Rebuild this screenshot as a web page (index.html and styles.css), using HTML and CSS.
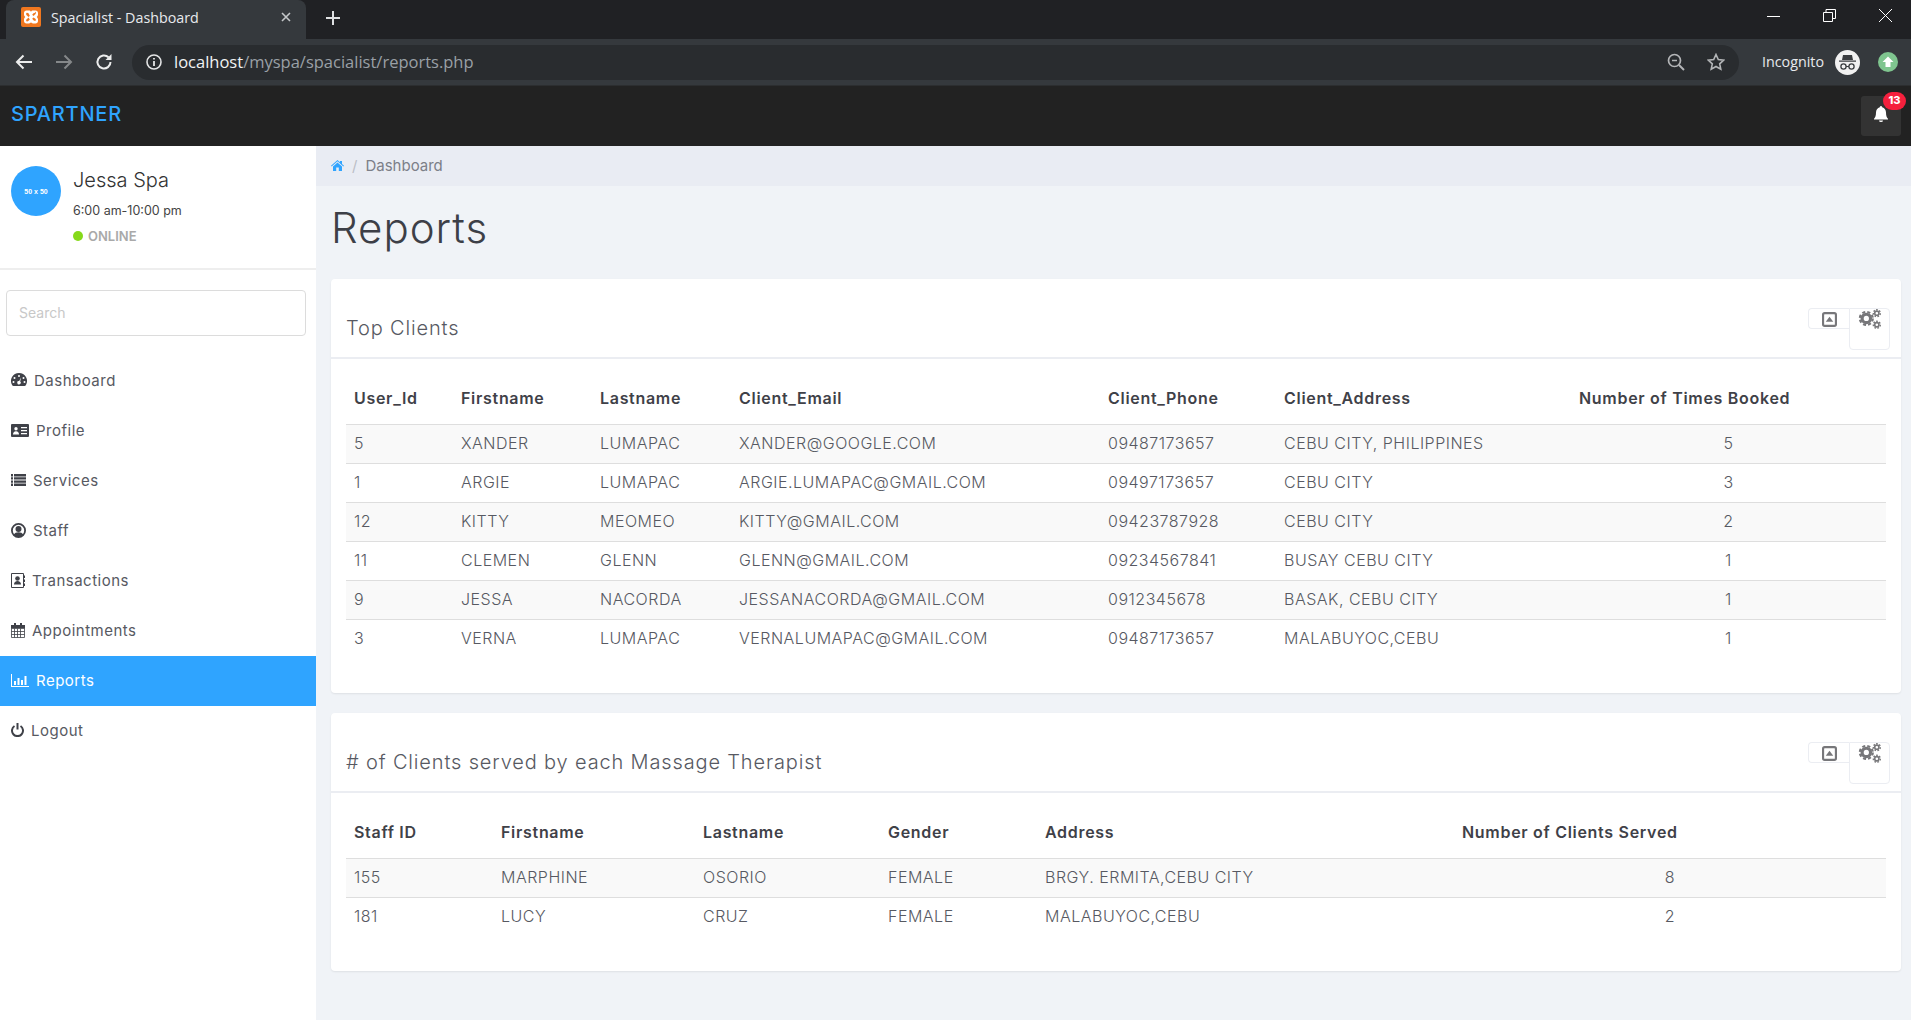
FILE: index.html
```html
<!DOCTYPE html>
<html lang="en">
<head>
    <meta charset="UTF-8">
    <meta name="viewport" content="width=device-width, initial-scale=1.0">
    <title>Spacialist - Dashboard</title>
    <link rel="stylesheet" href="styles.css">
</head>
<body>
    <!-- browser chrome -->
    <div class="tabbar">
        <div class="tab">
            <svg class="favicon" width="20" height="20" viewBox="0 0 20 20"><rect width="20" height="20" rx="2" fill="#f0771f"/><path fill-rule="evenodd" d="M5.500 3.500h2.500c1 0 1.500.5 2 1.200.5-.7 1-1.200 2-1.200h2.500c1.500 0 2.500 1 2.500 2.500v1.500c0 1-.5 1.800-1.300 2.500.8.700 1.300 1.500 1.300 2.500V14c0 1.500-1 2.500-2.500 2.500H12c-1 0-1.500-.5-2-1.200-.5.7-1 1.200-2 1.200H5.500C4 16.500 3 15.500 3 14v-1.500c0-1 .5-1.800 1.300-2.500C3.500 9.300 3 8.500 3 7.500V6c0-1.500 1-2.500 2.500-2.500zM6 5.700c-.6 0-.8.300-.8.800v.8c0 .5.200.8.800 1.200l1.500 1.500 1.300-1.300L7.500 6.300c-.4-.4-.8-.6-1.500-.6zM14 5.700c-.7 0-1.100.2-1.500.6l-1.300 1.400 1.300 1.300L14 7.500c.6-.4.800-.7.800-1.200v-.8c0-.5-.2-.8-.8-.8zM7.500 10.500L6 12c-.6.400-.8.700-.8 1.200v.6c0 .5.200.6.800.6.7 0 1.100-.2 1.500-.6l1.300-1.400zM12.500 10.500l-1.300 1.300 1.300 1.400c.4.400.8.600 1.500.6.600 0 .8-.1.800-.6v-.6c0-.5-.2-.8-.8-1.200z" fill="#fff"/></svg>
            <span class="tab-title">Spacialist - Dashboard</span>
            <svg class="tab-close" width="10" height="10" viewBox="0 0 10 10"><path d="M1 1l8 8M9 1l-8 8" stroke="#c4c7c9" stroke-width="1.600"/></svg>
        </div>
        <svg class="tab-new" width="14" height="14" viewBox="0 0 14 14"><path d="M7 0v14M0 7h14" stroke="#dfe1e3" stroke-width="2"/></svg>
        <div class="window-btns">
            <svg width="13" height="13" viewBox="0 0 13 13"><path d="M0 7.500h13" stroke="#fff"/></svg>
            <svg width="13" height="13" viewBox="0 0 13 13"><path d="M.5 3.500h9v9h-9zM3 3.500v-3h9.500v9h-3" fill="none" stroke="#fff"/></svg>
            <svg width="13" height="13" viewBox="0 0 13 13"><path d="M0 0l13 13M13 0L0 13" stroke="#fff"/></svg>
        </div>
    </div>
    <div class="toolbar">
        <svg class="tool-ico" width="18" height="16" viewBox="0 0 18 16"><path d="M17 8H2M8.500 1.500L2 8l6.500 6.500" fill="none" stroke="#eceded" stroke-width="2"/></svg>
        <svg class="tool-ico" width="18" height="16" viewBox="0 0 18 16"><path d="M1 8h15M9.500 1.500L16 8l-6.500 6.500" fill="none" stroke="#85888a" stroke-width="2"/></svg>
        <svg class="tool-ico" width="18" height="18" viewBox="0 0 18 18"><path d="M15.500 9a6.500 6.500 0 1 1-2-4.700" fill="none" stroke="#eceded" stroke-width="2"/><path d="M16.500 1v6h-6z" fill="#eceded"/></svg>
        <div class="urlbar">
            <svg width="16" height="16" viewBox="0 0 16 16"><circle cx="8" cy="8" r="7" fill="none" stroke="#e4e5e6" stroke-width="1.600"/><path d="M8 7v5M8 4v1.600" stroke="#e4e5e6" stroke-width="1.800"/></svg>
            <span class="url"><b>localhost</b>/myspa/spacialist/reports.php</span>
            <svg class="url-zoom" width="18" height="18" viewBox="0 0 18 18"><circle cx="7.500" cy="7.500" r="6" fill="none" stroke="#b3b5b7" stroke-width="1.700"/><path d="M12 12l5 5" stroke="#b3b5b7" stroke-width="2"/><path d="M5 7.500h5" stroke="#b3b5b7" stroke-width="1.500"/></svg>
            <svg width="18" height="18" viewBox="0 0 18 18"><path d="M9 1.500l2.300 5 5.400.6-4 3.700 1.100 5.400L9 13.500l-4.800 2.700 1.100-5.400-4-3.700 5.400-.6z" fill="none" stroke="#b3b5b7" stroke-width="1.600"/></svg>
        </div>
        <span class="incognito">Incognito</span>
        <svg class="incog-ico" width="25" height="25" viewBox="0 0 25 25"><circle cx="12.500" cy="12.500" r="12.500" fill="#f1f1f1"/><path d="M8 5h9l1 5H7zM4 10.500h17v1.300H4z" fill="#3a3d40"/><circle cx="8.500" cy="16.500" r="2.600" fill="none" stroke="#3a3d40" stroke-width="1.300"/><circle cx="16.500" cy="16.500" r="2.600" fill="none" stroke="#3a3d40" stroke-width="1.300"/><path d="M11 16.500h3" stroke="#3a3d40"/></svg>
        <svg class="ext-ico" width="20" height="20" viewBox="0 0 20 20"><circle cx="10" cy="10" r="10" fill="#7fc58f"/><path d="M10 4.500l5.500 5.500h-3v5h-5v-5h-3z" fill="#fff"/></svg>
    </div>

    <div class="navbar">
        <a class="brand">SPARTNER</a>
        <div class="bell">
            <svg width="14" height="16" viewBox="0 0 14 16"><path d="M7 0c1 0 1.200.8 1.200 1.300C10.600 1.900 12 4 12 6.500c0 3.500.8 5 2 6.200V13.500H0v-.8C1.200 11.500 2 10 2 6.500 2 4 3.400 1.900 5.800 1.300 5.800.8 6 0 7 0zM5 14.500h4a2 1.500 0 0 1-4 0z" fill="#fff"/></svg>
            <span class="badge">13</span>
        </div>
    </div>

    <div class="layout">
        <aside class="sidebar">
            <div class="user-box">
                <div class="avatar">50 x 50</div>
                <div class="user-info">
                    <div class="user-name">Jessa Spa</div>
                    <div class="user-hours">6:00 am-10:00 pm</div>
                    <div class="user-status"><span class="dot"></span>ONLINE</div>
                </div>
            </div>
            <div class="search-wrap"><input class="search" type="text" placeholder="Search"></div>
            <ul class="menu">
                <li><svg width="16" height="14" viewBox="0 0 16 14"><path fill-rule="evenodd" d="M8 0a8 8 0 0 1 6.800 12.200c-.3.500-.7.800-1.200.8H2.400c-.5 0-.9-.3-1.200-.8A8 8 0 0 1 8 0zM8 2a1 1 0 1 0 0 2 1 1 0 0 0 0-2zM3.500 4a1 1 0 1 0 0 2 1 1 0 0 0 0-2zM12.500 4a1 1 0 1 0 0 2 1 1 0 0 0 0-2zM2.500 8a1 1 0 1 0 0 2 1 1 0 0 0 0-2zM13.500 8a1 1 0 1 0 0 2 1 1 0 0 0 0-2zM10 4.500L8.200 8a1.700 1.700 0 1 0 1 .5z"/></svg>Dashboard</li>
                <li><svg width="18" height="13" viewBox="0 0 18 13"><path fill-rule="evenodd" d="M0 1q0-1 1-1h16q1 0 1 1v11q0 1-1 1H1q-1 0-1-1zM5 3a1.700 1.700 0 1 0 0 3.400A1.700 1.700 0 0 0 5 3zM2 10.500h6c0-2-1-3.300-3-3.300s-3 1.300-3 3.300zM10 3v1.200h6V3zM10 6v1.200h6V6zM10 9v1.200h6V9z"/></svg>Profile</li>
                <li><svg width="15" height="12" viewBox="0 0 15 12"><path d="M0 0h2v2.400H0zM3 0h12v2.400H3zM0 3.200h2v2.400H0zM3 3.200h12v2.400H3zM0 6.400h2v2.400H0zM3 6.400h12v2.400H3zM0 9.600h2V12H0zM3 9.600h12V12H3z"/></svg>Services</li>
                <li><svg width="15" height="15" viewBox="0 0 15 15"><circle cx="7.500" cy="7.500" r="6.600" fill="none" stroke="currentColor" stroke-width="1.800"/><circle cx="7.500" cy="6" r="3"/><path d="M2.500 12c1-2 3-2.700 5-2.700s4 .7 5 2.700c-1.300 1.300-3 2-5 2s-3.700-.7-5-2z"/></svg>Staff</li>
                <li><svg width="14" height="15" viewBox="0 0 14 15"><path d="M.5.500h12v14H.5z" fill="none" stroke="currentColor"/><circle cx="6.500" cy="5.500" r="2.300"/><path d="M3 11.500c0-2.300 1.500-3.500 3.500-3.500s3.500 1.200 3.500 3.500z"/><path d="M13 2.500h1v2.500h-1zM13 6.500h1V9h-1zM13 10.500h1V13h-1z"/></svg>Transactions</li>
                <li><svg width="14" height="15" viewBox="0 0 14 15"><path d="M.5 2.500h13v12H.5zM.5 5.500h13M.5 8.500h13M.5 11.500h13M3.500 5.500v9M6.500 5.500v9M9.500 5.500v9" fill="none" stroke="currentColor" stroke-width=".8"/><path d="M3 0h2v4H3zM9 0h2v4H9zM0 2h14v3H0z"/></svg>Appointments</li>
                <li class="active"><svg width="18" height="13" viewBox="0 0 18 13"><path d="M0 0h1v12h17v1H0zM3 7h2v4H3zM6.500 4h2v7h-2zM10 6h2v5h-2zM13.500 2h2v9h-2z"/></svg>Reports</li>
                <li><svg width="13" height="14" viewBox="0 0 13 14"><path d="M3.500 3a5.500 5.500 0 1 0 6 0" fill="none" stroke="currentColor" stroke-width="2"/><path d="M6.500 0v6.500" stroke="currentColor" stroke-width="2"/></svg>Logout</li>
            </ul>
        </aside>

        <main class="content">
            <div class="breadcrumb">
                <svg width="13" height="11" viewBox="0 0 13 11"><path d="M6.500 0l2.500 2.200V1h2v3l2 1.800-.6.700L6.500 1.200.6 6.500 0 5.800zM2 6.500l4.500-4 4.500 4V11H7.800V7.500H5.200V11H2z" fill="#2fa4ff"/></svg>
                <span class="sep">/</span>
                <span>Dashboard</span>
            </div>
            <h1 class="page-title">Reports</h1>

            <section class="card">
                <div class="card-head">
                    <h2>Top Clients</h2>
                    <div class="tools">
                        <div class="tool tool-up"><svg width="15" height="15" viewBox="0 0 14 14"><rect x="1" y="1" width="12" height="12" rx="1.500" fill="none" stroke="#77777a" stroke-width="2"/><path d="M7 4.500L10.500 9h-7z" fill="#77777a"/></svg></div>
                        <div class="tool tool-cog"><svg width="24" height="21" viewBox="0 0 22 20"><circle cx="7.500" cy="9" r="4" fill="none" stroke="#77777a" stroke-width="3"/><circle cx="7.500" cy="9" r="6.200" fill="none" stroke="#77777a" stroke-width="2" stroke-dasharray="2.900 2"/><circle cx="17.500" cy="4" r="2" fill="none" stroke="#77777a" stroke-width="1.500"/><circle cx="17.500" cy="4" r="3.300" fill="none" stroke="#77777a" stroke-width="1.400" stroke-dasharray="1.600 1.300"/><circle cx="17.500" cy="15" r="2" fill="none" stroke="#77777a" stroke-width="1.500"/><circle cx="17.500" cy="15" r="3.300" fill="none" stroke="#77777a" stroke-width="1.400" stroke-dasharray="1.600 1.300"/></svg></div>
                    </div>
                </div>
                <div class="card-body">
                    <table class="tbl tbl-clients">
                        <thead>
                            <tr><th>User_Id</th><th>Firstname</th><th>Lastname</th><th>Client_Email</th><th>Client_Phone</th><th>Client_Address</th><th>Number of Times Booked</th></tr>
                        </thead>
                        <tbody>
                            <tr><td>5</td><td>XANDER</td><td>LUMAPAC</td><td>XANDER@GOOGLE.COM</td><td>09487173657</td><td>CEBU CITY, PHILIPPINES</td><td>5</td></tr>
                            <tr><td>1</td><td>ARGIE</td><td>LUMAPAC</td><td>ARGIE.LUMAPAC@GMAIL.COM</td><td>09497173657</td><td>CEBU CITY</td><td>3</td></tr>
                            <tr><td>12</td><td>KITTY</td><td>MEOMEO</td><td>KITTY@GMAIL.COM</td><td>09423787928</td><td>CEBU CITY</td><td>2</td></tr>
                            <tr><td>11</td><td>CLEMEN</td><td>GLENN</td><td>GLENN@GMAIL.COM</td><td>09234567841</td><td>BUSAY CEBU CITY</td><td>1</td></tr>
                            <tr><td>9</td><td>JESSA</td><td>NACORDA</td><td>JESSANACORDA@GMAIL.COM</td><td>0912345678</td><td>BASAK, CEBU CITY</td><td>1</td></tr>
                            <tr><td>3</td><td>VERNA</td><td>LUMAPAC</td><td>VERNALUMAPAC@GMAIL.COM</td><td>09487173657</td><td>MALABUYOC,CEBU</td><td>1</td></tr>
                        </tbody>
                    </table>
                </div>
            </section>

            <section class="card">
                <div class="card-head">
                    <h2># of Clients served by each Massage Therapist</h2>
                    <div class="tools">
                        <div class="tool tool-up"><svg width="15" height="15" viewBox="0 0 14 14"><rect x="1" y="1" width="12" height="12" rx="1.500" fill="none" stroke="#77777a" stroke-width="2"/><path d="M7 4.500L10.500 9h-7z" fill="#77777a"/></svg></div>
                        <div class="tool tool-cog"><svg width="24" height="21" viewBox="0 0 22 20"><circle cx="7.500" cy="9" r="4" fill="none" stroke="#77777a" stroke-width="3"/><circle cx="7.500" cy="9" r="6.200" fill="none" stroke="#77777a" stroke-width="2" stroke-dasharray="2.900 2"/><circle cx="17.500" cy="4" r="2" fill="none" stroke="#77777a" stroke-width="1.500"/><circle cx="17.500" cy="4" r="3.300" fill="none" stroke="#77777a" stroke-width="1.400" stroke-dasharray="1.600 1.300"/><circle cx="17.500" cy="15" r="2" fill="none" stroke="#77777a" stroke-width="1.500"/><circle cx="17.500" cy="15" r="3.300" fill="none" stroke="#77777a" stroke-width="1.400" stroke-dasharray="1.600 1.300"/></svg></div>
                    </div>
                </div>
                <div class="card-body">
                    <table class="tbl tbl-staff">
                        <thead>
                            <tr><th>Staff ID</th><th>Firstname</th><th>Lastname</th><th>Gender</th><th>Address</th><th>Number of Clients Served</th></tr>
                        </thead>
                        <tbody>
                            <tr><td>155</td><td>MARPHINE</td><td>OSORIO</td><td>FEMALE</td><td>BRGY. ERMITA,CEBU CITY</td><td>8</td></tr>
                            <tr><td>181</td><td>LUCY</td><td>CRUZ</td><td>FEMALE</td><td>MALABUYOC,CEBU</td><td>2</td></tr>
                        </tbody>
                    </table>
                </div>
            </section>
        </main>
    </div>
</body>
</html>
```

FILE: styles.css
```css
* {
    box-sizing: border-box;
}

body {
    margin: 0;
    height: 100vh;
    overflow: hidden;
    display: flex;
    flex-direction: column;
    font-family: Inter, "Open Sans", sans-serif;
    font-size: 14px;
    color: #575962;
    background-color: #f0f3f7;
}

/* browser chrome */
.tabbar {
    height: 39px;
    flex: none;
    display: flex;
    align-items: center;
    padding-left: 6px;
    background-color: #202124;
    font-family: "Open Sans", sans-serif;
}

.tab {
    width: 300px;
    height: 39px;
    display: flex;
    align-items: center;
    padding: 0 15px 5px;
    border-radius: 8px 8px 0 0;
    background-color: #35393d;
    color: #e8eaed;
    font-size: 14.3px;
}

.tab-title {
    flex: 1;
    margin-left: 10px;
}

.tab-new {
    margin: -3px 0 0 20px;
}

.window-btns {
    margin-left: auto;
    display: flex;
    gap: 43px;
    padding-right: 19px;
    margin-top: -8px;
}

.toolbar {
    height: 46px;
    flex: none;
    display: flex;
    align-items: center;
    padding-left: 15px;
    background-color: #35393d;
    font-family: "Open Sans", sans-serif;
}

.tool-ico {
    margin-right: 22px;
}

.urlbar {
    width: 1607px;
    height: 35px;
    flex: none;
    display: flex;
    align-items: center;
    margin-left: -3px;
    padding: 0 14px;
    border-radius: 18px;
    background-color: #292c2f;
    font-size: 16.5px;
    color: #9aa0a6;
}

.url {
    margin: -2px 0 0 12px;
    flex: 1;
}

.url b {
    font-weight: 400;
    color: #f1f3f4;
}

.url-zoom {
    margin-right: 22px;
}

.incognito {
    margin: -2px 0 0 23px;
    color: #e8eaed;
    font-size: 14.3px;
}

.incog-ico {
    margin-left: 11px;
}

.ext-ico {
    margin-left: 18px;
}

/* app navbar */
.navbar {
    height: 61px;
    flex: none;
    display: flex;
    align-items: center;
    justify-content: space-between;
    padding: 0 10px 0 11px;
    background-color: #222222;
    border-top: 1px solid #2c2e30;
}

.brand {
    margin-bottom: 4px;
    color: #2fa4ff;
    font-size: 20px;
    font-weight: 500;
    letter-spacing: .8px;
}

.bell {
    position: relative;
    width: 40px;
    height: 40px;
    display: flex;
    align-items: center;
    justify-content: center;
    padding-bottom: 4px;
    border-radius: 3px;
    background-color: #333333;
}

.badge {
    position: absolute;
    top: -4px;
    right: -5px;
    width: 23px;
    height: 18px;
    border-radius: 9px;
    background-color: #f5203d;
    color: #fff;
    font-size: 11px;
    font-weight: 800;
    line-height: 16px;
    text-align: center;
}

.layout {
    flex: 1;
    display: flex;
    min-height: 0;
}

/* sidebar */
.sidebar {
    width: 316px;
    flex: none;
    background-color: #fff;
}

.user-box {
    height: 124px;
    display: flex;
    padding: 21px 11px 0;
    border-bottom: 2px solid #eeeeee;
}

.avatar {
    width: 50px;
    height: 50px;
    flex: none;
    display: flex;
    align-items: center;
    justify-content: center;
    margin: -1px 12px 0 0;
    border-radius: 50%;
    background-color: #2fa4ff;
    color: #fff;
    font-family: "Liberation Sans", sans-serif;
    font-size: 7px;
    font-weight: 700;
}

.user-name {
    font-size: 20px;
    font-weight: 300;
    color: #333;
    line-height: 26px;
}

.user-hours {
    margin-top: 8px;
    font-size: 12.5px;
    color: #444;
    line-height: 20px;
}

.user-status {
    display: flex;
    align-items: center;
    margin-top: 5px;
    font-size: 13px;
    font-weight: 600;
    color: #a9a9a9;
    line-height: 20px;
}

.dot {
    width: 10px;
    height: 10px;
    margin-right: 5px;
    border-radius: 50%;
    background-color: #86d91a;
}

.search-wrap {
    padding: 20px 10px 20px 6px;
}

.search {
    width: 100%;
    height: 46px;
    padding: 0 12px 2px;
    border: 1px solid #dcdcdc;
    border-radius: 4px;
    outline: none;
    font-family: inherit;
    font-size: 14px;
}

.search::placeholder {
    color: #c8c8c8;
}

.menu {
    margin: 0;
    padding: 0;
    list-style: none;
}

.menu li {
    height: 50px;
    display: flex;
    align-items: center;
    padding: 0 0 2px 11px;
    font-size: 15px;
    font-weight: 400;
    letter-spacing: .5px;
    color: #575962;
}

.menu li svg {
    margin-right: 7px;
    fill: #3f4148;
    color: #3f4148;
}

.menu li.active {
    background-color: #2fa4ff;
    color: #fff;
}

.menu li.active svg {
    fill: #fff;
    color: #fff;
}

/* main content */
.content {
    flex: 1;
    min-width: 0;
    padding-right: 10px;
}

.breadcrumb {
    height: 40px;
    display: flex;
    align-items: center;
    gap: 8px;
    margin-right: -10px;
    padding: 0 0 2px 15px;
    background-color: #e9ecf3;
    color: #7c7f88;
    font-size: 15px;
}

.sep {
    color: #bbbec6;
}

.page-title {
    height: 93px;
    margin: 0;
    padding: 20px 0 0 15px;
    font-size: 42px;
    font-weight: 300;
    letter-spacing: 1px;
    color: #3d3f47;
    line-height: 44px;
}

.card {
    margin: 0 0 20px 15px;
    border-radius: 4px;
    background-color: #fff;
    box-shadow: 0 1px 2px rgba(0, 0, 0, .08);
}

.card-head {
    height: 80px;
    display: flex;
    justify-content: space-between;
    padding: 29px 11px 0 15px;
    border-bottom: 2px solid #ebedf2;
}

.card-head h2 {
    margin: 8px 0 0;
    font-size: 20px;
    font-weight: 300;
    letter-spacing: .85px;
    line-height: 24px;
    color: #575962;
}

.tools {
    display: flex;
    align-items: flex-start;
}

.tool {
    width: 41px;
    display: flex;
    justify-content: center;
    border: 1px solid #ebedf2;
}

.tool-up {
    height: 21px;
    padding-top: 2px;
    align-items: center;
    border-right: none;
    border-radius: 4px 0 0 4px;
}

.tool-cog {
    height: 42px;
    border-radius: 0 4px 4px 4px;
    align-items: flex-start;
}

.card-body {
    padding: 19px 15px 35px;
}

.tbl {
    width: 100%;
    table-layout: fixed;
    border-collapse: collapse;
    color: #575962;
}

.tbl th {
    height: 46px;
    padding: 0 8px 5px;
    text-align: left;
    font-size: 16px;
    font-weight: 600;
    letter-spacing: .7px;
    color: #3f4148;
}

.tbl td {
    height: 39px;
    padding: 0 8px 2px;
    border-top: 1px solid #dedede;
    font-size: 16px;
    font-weight: 300;
    letter-spacing: .5px;
}

.tbl tbody tr:nth-child(odd) {
    background-color: #f9f9f9;
}

.tbl td:last-child {
    text-align: center;
}

.tbl-clients th:nth-child(1) { width: 107px; }
.tbl-clients th:nth-child(2) { width: 139px; }
.tbl-clients th:nth-child(3) { width: 139px; }
.tbl-clients th:nth-child(4) { width: 369px; }
.tbl-clients th:nth-child(5) { width: 176px; }
.tbl-clients th:nth-child(6) { width: 295px; }

.tbl-staff th:nth-child(1) { width: 147px; }
.tbl-staff th:nth-child(2) { width: 202px; }
.tbl-staff th:nth-child(3) { width: 185px; }
.tbl-staff th:nth-child(4) { width: 157px; }
.tbl-staff th:nth-child(5) { width: 417px; }
```
